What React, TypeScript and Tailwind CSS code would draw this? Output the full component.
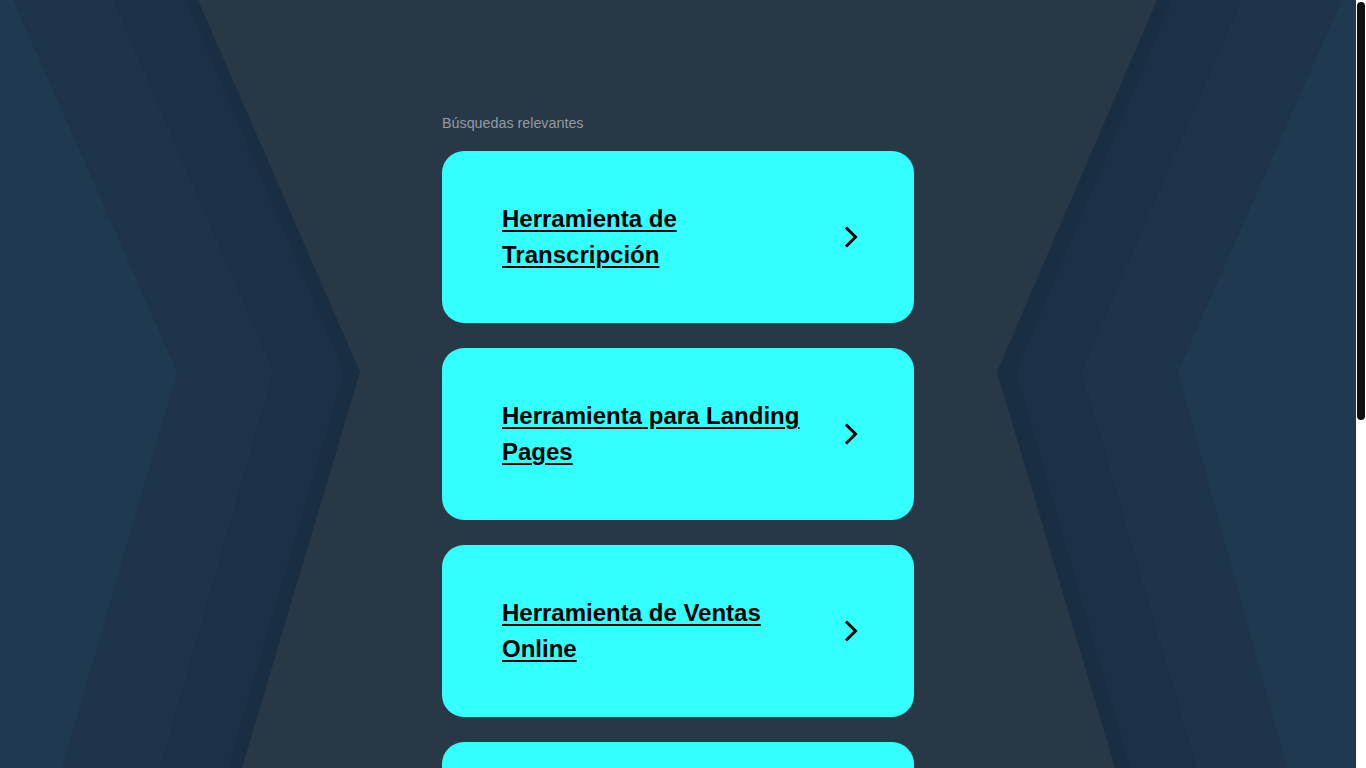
const searches = [
  'Herramienta de Transcripción',
  'Herramienta para Landing Pages',
  'Herramienta de Ventas Online',
  'Herramienta de Edición de Video',
  'Herramienta de Email Marketing',
]

function Chevron() {
  return (
    <svg width="24" height="24" viewBox="0 0 24 24" fill="none" className="shrink-0">
      <path d="M8 3.5 L16.5 12 L8 20.5" stroke="#000" strokeWidth="3" strokeLinecap="square" strokeLinejoin="miter" />
    </svg>
  )
}

function Backdrop() {
  return (
    <svg className="absolute inset-0 w-full h-full" viewBox="0 0 1356 768" preserveAspectRatio="none">
      <rect width="1356" height="768" fill="#283847" />
      <polygon points="0,0 198,0 360,372 242,768 0,768" fill="#1a2e43" />
      <polygon points="0,0 186,0 344,372 228,768 0,768" fill="#1c3147" />
      <polygon points="0,0 113,0 273,372 160,768 0,768" fill="#1e344b" />
      <polygon points="0,0 13,0 177,372 62,768 0,768" fill="#1f3a50" />
      <polygon points="1157,0 1356,0 1356,768 1115,768 997,372" fill="#1a2e43" />
      <polygon points="1172,0 1356,0 1356,768 1130,768 1016,372" fill="#1c3147" />
      <polygon points="1242,0 1356,0 1356,768 1197,768 1082,372" fill="#1e344b" />
      <polygon points="1342,0 1356,0 1356,768 1287,768 1178,372" fill="#1f3a50" />
    </svg>
  )
}

export default function App() {
  return (
    <div className="flex h-screen w-full overflow-hidden bg-white" style={{ fontFamily: '"Liberation Sans", Arial, sans-serif' }}>
      <div className="relative flex-1">
        <Backdrop />
        <div className="absolute inset-0 overflow-y-auto [scrollbar-width:none]">
          <div className="mx-auto w-[472px] pt-[113px] pb-[300px]">
            <p className="text-[14.3px] leading-5 text-[#949ba2] mb-[18px]">Búsquedas relevantes</p>
            <div className="flex flex-col gap-[25px]">
              {searches.map(s => (
                <a
                  key={s}
                  href="#"
                  className="flex items-center gap-4 h-[172px] rounded-[22px] bg-[#33ffff] pl-[60px] pr-[51px]"
                >
                  <span className="flex-1 text-2xl leading-9 font-bold text-black underline decoration-2 underline-offset-[3px]">
                    {s}
                  </span>
                  <Chevron />
                </a>
              ))}
            </div>
          </div>
        </div>
      </div>
      <div className="w-[10px] shrink-0 bg-white pt-[2px] pl-[1px] pr-[1px]">
        <div className="h-[418px] rounded-[4px] bg-[#111]" />
      </div>
    </div>
  )
}
